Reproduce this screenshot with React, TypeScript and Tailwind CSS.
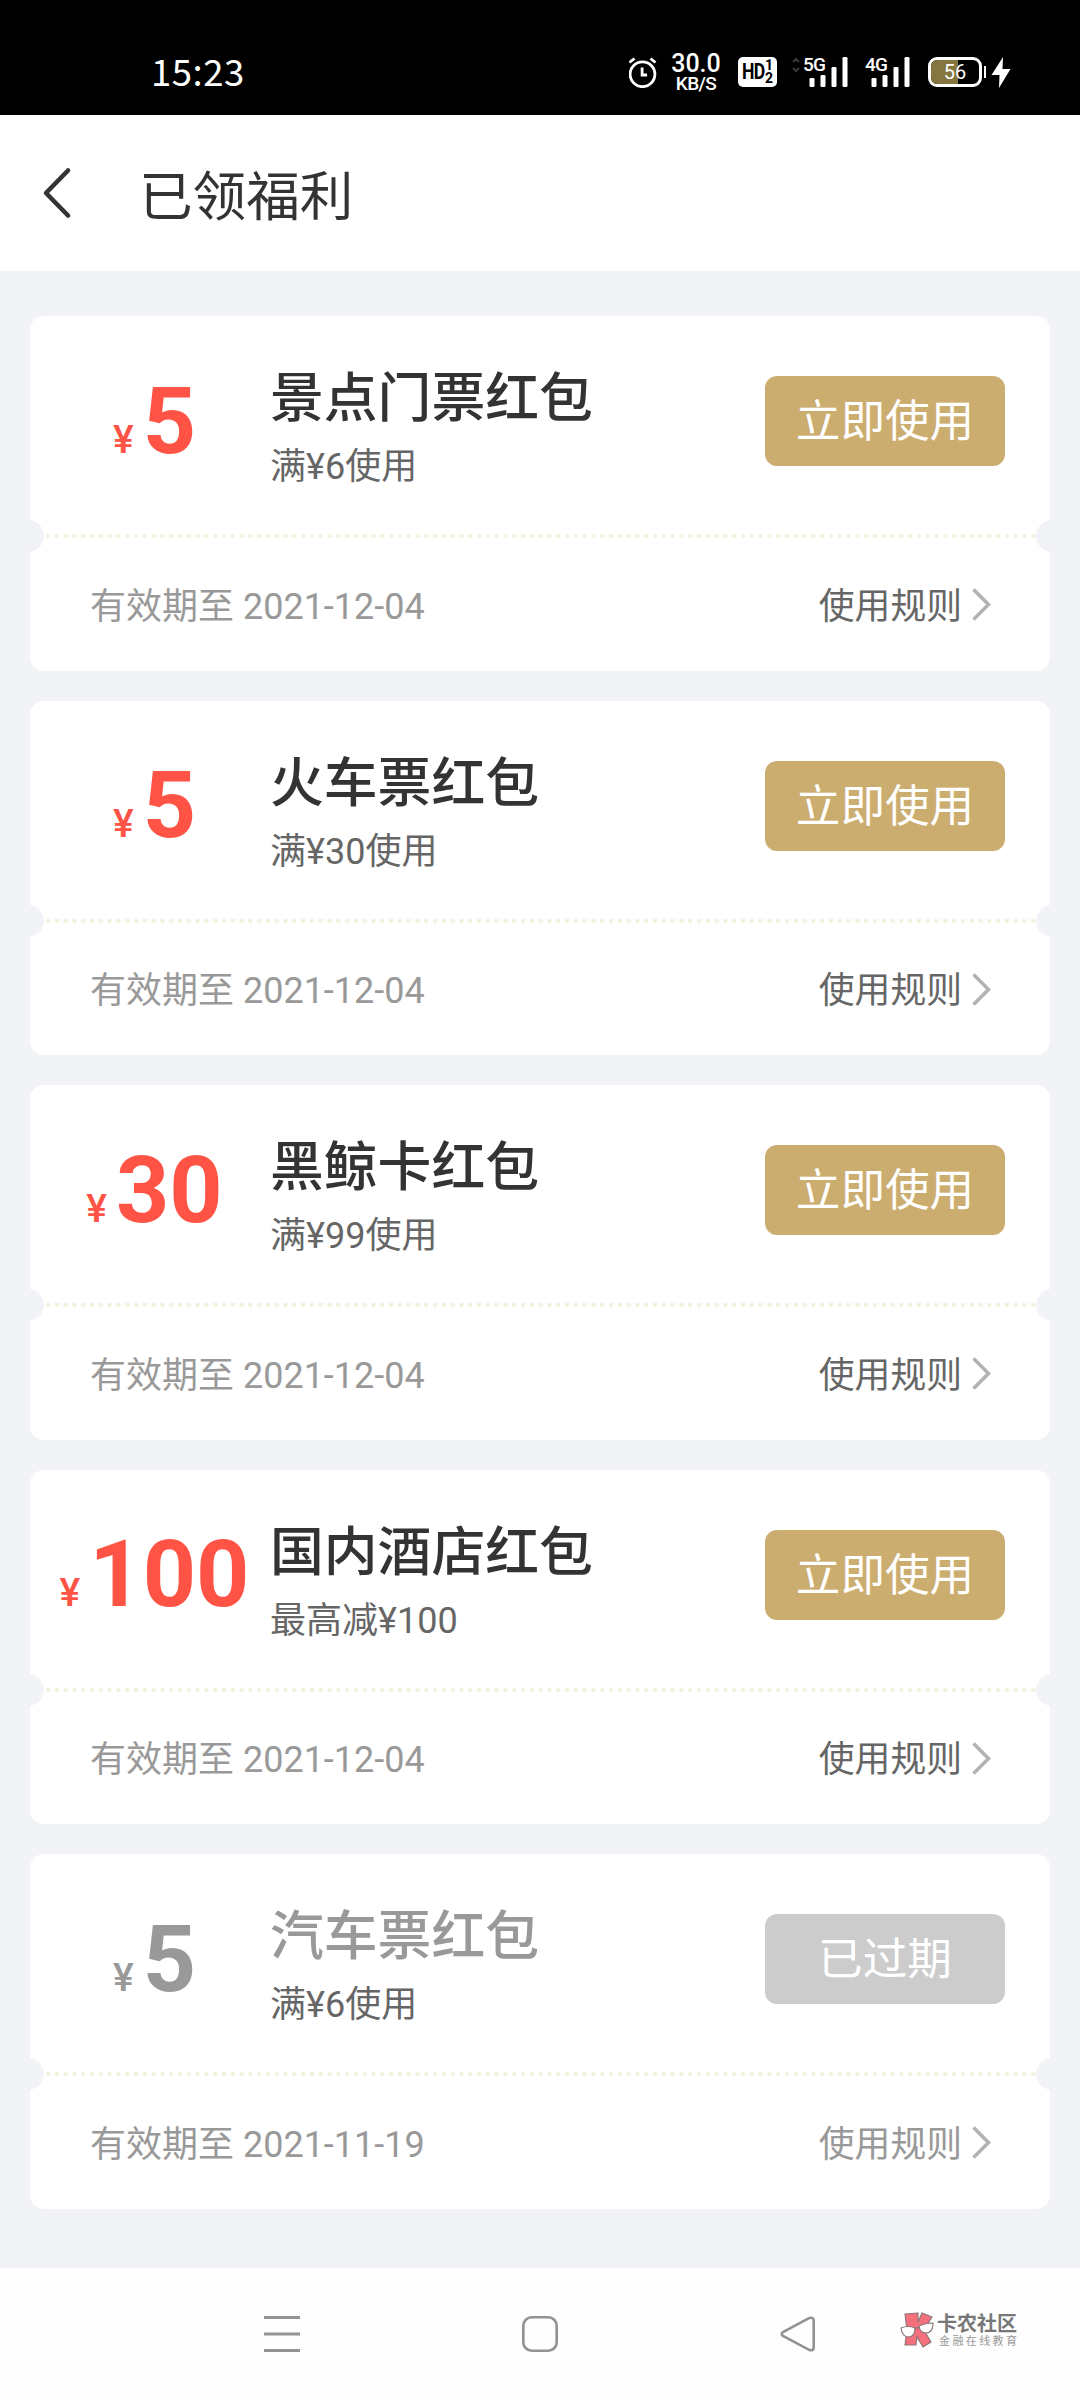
type Coupon = {
  amount: string;
  title: string;
  condition: string;
  expires: string;
  expired?: boolean;
};

const coupons: Coupon[] = [
  { amount: "5", title: "景点门票红包", condition: "满¥6使用", expires: "2021-12-04" },
  { amount: "5", title: "火车票红包", condition: "满¥30使用", expires: "2021-12-04" },
  { amount: "30", title: "黑鲸卡红包", condition: "满¥99使用", expires: "2021-12-04" },
  { amount: "100", title: "国内酒店红包", condition: "最高减¥100", expires: "2021-12-04" },
  { amount: "5", title: "汽车票红包", condition: "满¥6使用", expires: "2021-11-19", expired: true },
];

function SignalIcon({ label, arrows }: { label: string; arrows?: boolean }) {
  return (
    <div className="relative h-[30px] w-[45px]">
      <span className="absolute left-[-1px] top-[-1px] font-['Roboto'] text-[19px] font-medium leading-[18px] tracking-[-0.8px]">
        {label}
      </span>
      {arrows ? (
        <svg className="absolute left-[-12px] top-0 h-4 w-2" viewBox="0 0 8 16" fill="none" stroke="#3a3a3a" strokeWidth="2">
          <path d="M1 5l3-3 3 3M1 11l3 3 3-3" />
        </svg>
      ) : null}
      <svg className="absolute inset-0" width="45" height="30" viewBox="0 0 45 30" fill="currentColor">
        <rect x="5.5" y="21" width="5" height="9" rx="1.2" />
        <rect x="16.5" y="18" width="5" height="12" rx="1.2" />
        <rect x="27.5" y="10" width="5" height="20" rx="1.2" />
        <rect x="38.5" y="0" width="5" height="30" rx="1.2" />
      </svg>
    </div>
  );
}

function StatusBar() {
  return (
    <div className="flex h-[115px] items-start justify-between bg-black pl-[151px] pr-[69px] text-white">
      <span className="mt-[50px] font-['Noto_Sans_CJK_SC'] text-[36.5px] leading-[42px] tracking-[0.5px]">15:23</span>
      <div className="mt-[57px] flex items-start">
        <svg width="30" height="31" viewBox="0 0 30 31" fill="none" stroke="currentColor" strokeWidth="2.8">
          <circle cx="13.5" cy="17.3" r="12.4" />
          <path d="M13.1 10.5v7.5h5M0.5 5.5l5-4M26.5 5.5l-5-4" />
        </svg>
        <div className="ml-[11px] mt-[-7px] flex w-[52px] flex-col items-center font-['Roboto'] font-medium">
          <span className="text-[25px] leading-[28px]">30.0</span>
          <span className="mt-[-5px] text-[19px] leading-[22px] tracking-[-0.6px]">KB/S</span>
        </div>
        <div className="ml-[16px] flex h-[30px] w-[39px] items-center justify-center rounded-[5px] bg-white font-['Roboto'] font-bold text-black">
          <span className="w-[22px] origin-left text-[22px] leading-[30px] tracking-[-1px] [transform:scaleX(0.8)]">HD</span>
          <span className="ml-[1px] flex flex-col text-[14px] leading-[13px]">
            <span>1</span>
            <span>2</span>
          </span>
        </div>
        <div className="ml-[27px]">
          <SignalIcon label="5G" arrows />
        </div>
        <div className="ml-[17px]">
          <SignalIcon label="4G" />
        </div>
        <div className="relative ml-[17px] h-[30px] w-[54px] overflow-hidden rounded-[9px] border-[3px] border-white">
          <div className="h-full w-[27px] bg-[#85763f]" />
          <span className="absolute inset-0 text-center font-['Roboto'] text-[20px] leading-[25px]">56</span>
        </div>
        <div className="ml-[2px] mt-[9px] h-3 w-[2px] bg-white" />
        <svg className="ml-[5px]" width="20" height="31" viewBox="0 0 20 31" fill="currentColor">
          <path d="M12 0L0.5 18H8.5L8 31L19.5 12H11.5Z" />
        </svg>
      </div>
    </div>
  );
}

function CouponCard({ coupon }: { coupon: Coupon }) {
  const { amount, title, condition, expires, expired } = coupon;

  return (
    <div className="relative h-[354.5px] overflow-hidden rounded-[14px] bg-white">
      <div className="flex h-[218px] items-start">
        <div
          className={`flex w-[240px] shrink-0 items-baseline justify-center whitespace-nowrap pl-[9px] pt-[50.5px] font-['Roboto'] ${
            expired ? "text-[#999999]" : "text-[#ff5445]"
          }`}
        >
          <span className="text-[39px] font-medium leading-none">¥</span>
          <span className="ml-[9px] text-[93px] font-bold leading-[109px]">{amount}</span>
        </div>
        <div className="flex-1 pt-[50px]">
          <h2
            className={`text-[53.8px] font-medium leading-[66px] ${expired ? "text-[#999999]" : "text-[#333333]"}`}
          >
            {title}
          </h2>
          <p className="mt-[14px] text-[36px] leading-[42px] text-[#666666]">{condition}</p>
        </div>
        <button
          type="button"
          className={`mr-[45px] mt-[60px] h-[90px] w-[240px] rounded-[12px] pt-[2px] text-[44.6px] leading-[88px] text-white ${
            expired ? "bg-[#cccccc]" : "bg-[#ccad70]"
          }`}
        >
          {expired ? "已过期" : "立即使用"}
        </button>
      </div>

      {/* perforation */}
      <div className="absolute left-[14px] right-[14px] top-[218px] h-1 bg-[radial-gradient(circle_at_4px_2px,#f2f2e0_0,#f2f2e0_2px,transparent_2.6px)] bg-[length:8.8px_4px]" />
      <div className="absolute left-[-18px] top-[204px] h-8 w-8 rounded-full bg-[#f2f3f7]" />
      <div className="absolute right-[-18px] top-[204px] h-8 w-8 rounded-full bg-[#f2f3f7]" />

      <div className="flex h-[136px] items-center justify-between pl-[60px] pr-[59px] pt-[9px] text-[36px] leading-[42px]">
        <span className="text-[#999999]">有效期至 {expires}</span>
        <span className={`flex items-center ${expired ? "text-[#999999]" : "text-[#666666]"}`}>
          <span className="text-[35.8px]">使用规则</span>
          <svg className="mb-[4px] ml-[10px]" width="19" height="33" viewBox="0 0 19 33" fill="none" stroke="#b2b2b2" strokeWidth="3.6">
            <path d="M1.5 1.5L16.5 16.5L1.5 31.5" />
          </svg>
        </span>
      </div>
    </div>
  );
}

function Watermark() {
  return (
    <div className="absolute left-[900px] top-[44px] flex">
      <svg width="35" height="36" viewBox="0 0 35 36" stroke="#8b7476" strokeWidth="1.1">
        <path d="M5 2L18 1L18 10L22 1L32 5L24 18L31 30L23 35L17 25L16 33L5 33L7 18Z" fill="#f4707c" />
        <path d="M1 16Q8 13 15 16Q15 25 8 25Q2 24 1 16Z" fill="#fff" />
        <path d="M19 14Q25 11 33 11Q33 21 26 21Q20 21 19 14Z" fill="#fff" />
        <path d="M15 17Q17 15 19 16" fill="none" />
      </svg>
      <div className="ml-[2px] whitespace-nowrap text-[#777777]">
        <p className="text-[20px] font-bold leading-[24px]">卡农社区</p>
        <p className="ml-[2px] text-[11px] leading-[11px] tracking-[2.4px] text-[#999999]">金融在线教育</p>
      </div>
    </div>
  );
}

function NavBar() {
  return (
    <div className="relative h-[132px] bg-[#fefefe]">
      <div className="flex items-center pl-[264px] pt-[48px] text-[#929292]">
        <svg width="36" height="36" viewBox="0 0 36 36" fill="none" stroke="currentColor" strokeWidth="3">
          <path d="M0 1.5H36M0 18H36M0 34.5H36" />
        </svg>
        <svg className="ml-[222px]" width="36" height="36" viewBox="0 0 36 36" fill="none" stroke="currentColor" strokeWidth="2.6">
          <rect x="1.3" y="1.3" width="33.4" height="33.4" rx="8.5" />
        </svg>
        <svg className="ml-[222px]" width="36" height="36" viewBox="0 0 36 36" fill="none" stroke="currentColor" strokeWidth="2.6">
          <path d="M29.5 1.9L3 16Q0.5 18 3 20L29.5 34.1Q33.7 35 33.7 31.5V4.5Q33.7 1 29.5 1.9Z" />
        </svg>
      </div>
      <Watermark />
    </div>
  );
}

export default function App() {
  return (
    <div className="flex h-[2400px] w-[1080px] flex-col overflow-hidden bg-[#f2f3f7] font-['Roboto','Noto_Sans_CJK_SC',sans-serif]">
      <StatusBar />
      <header className="flex h-[156px] items-center bg-white pl-[41px] text-[#333333]">
        <svg width="31" height="52" viewBox="0 0 31 52" fill="none" stroke="currentColor" strokeWidth="4.6" strokeLinecap="round" strokeLinejoin="round">
          <path d="M27 3.5L5 26L27 48.5" />
        </svg>
        <h1 className="ml-[67px] pt-[9px] text-[53.6px] leading-[66px]">已领福利</h1>
      </header>
      <main className="flex flex-1 flex-col gap-[30px] px-[30px] pt-[45px]">
        {coupons.map((coupon, index) => (
          <CouponCard key={index} coupon={coupon} />
        ))}
      </main>
      <NavBar />
    </div>
  );
}
